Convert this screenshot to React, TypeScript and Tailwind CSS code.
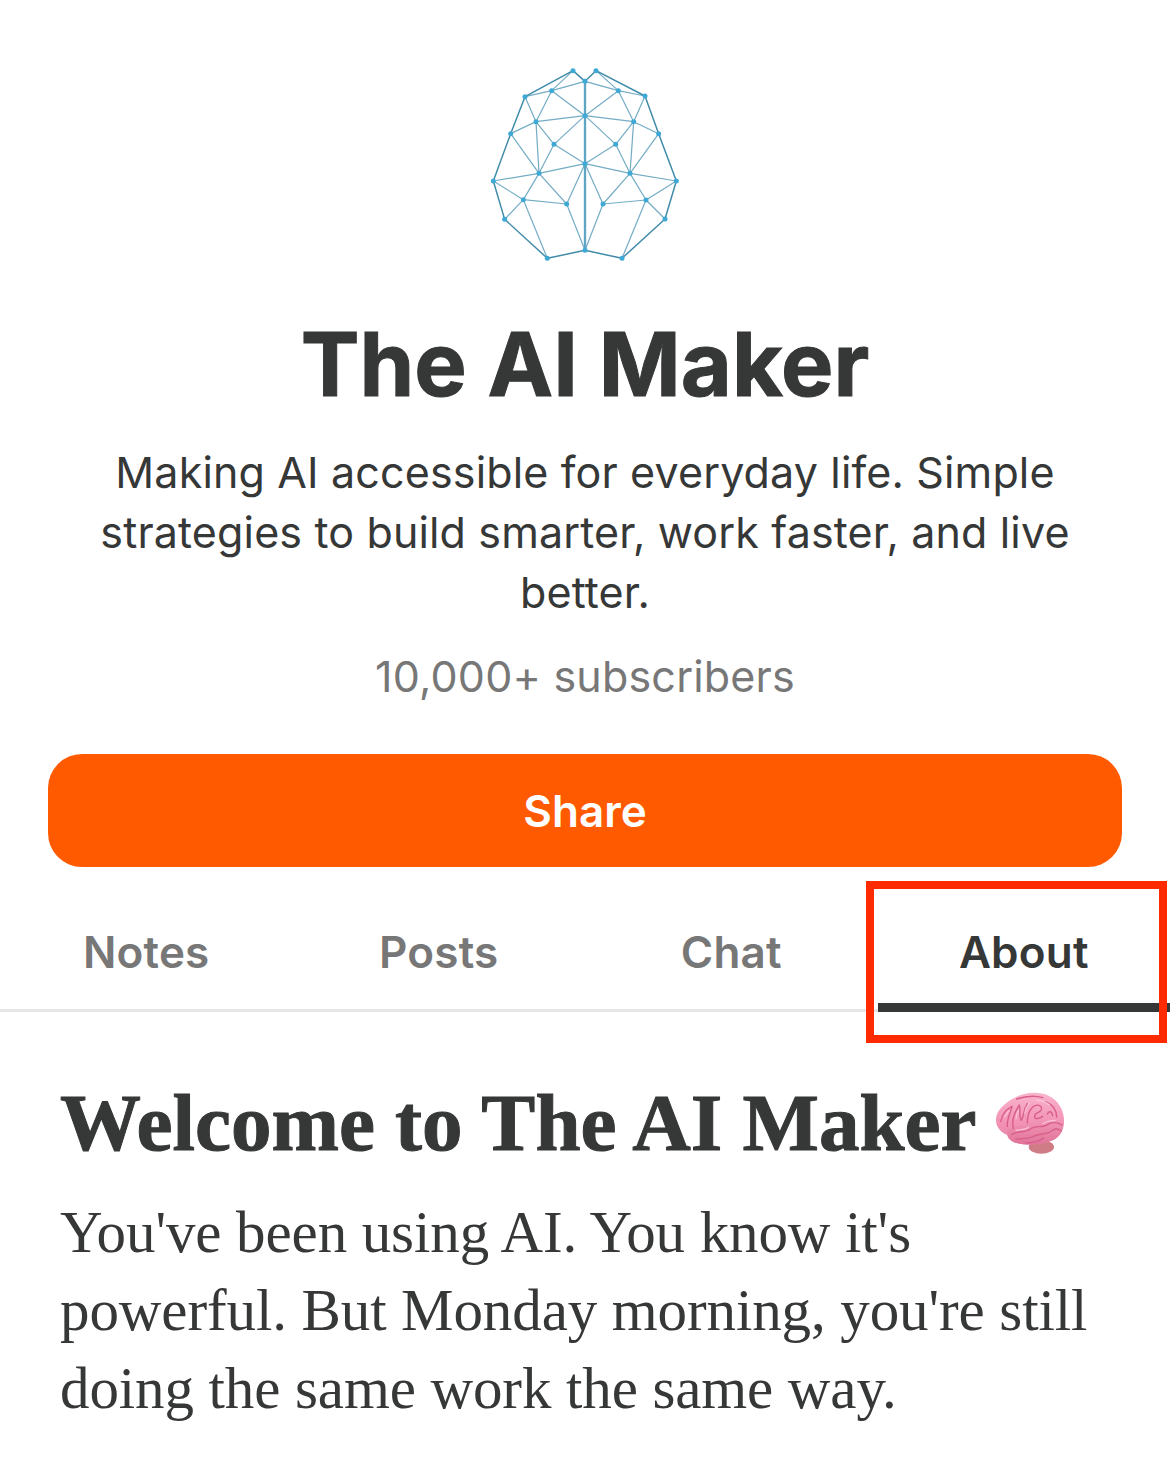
const outer: [number, number][] = [[309,62],[345,94],[378,62],[525,138],[566,251],[619,393],[585,507],[456,625],[345,601],[232,625],[104,508],[70,393],[122,251],[165,140]];
const inner: [number, number][] = [[245,122],[445,122],[345,197],[198,215],[491,215],[252,283],[437,283],[345,341],[207,370],[480,370],[160,449],[528,450],[290,462],[399,462]];
const edges: number[][] = [
[309,62,245,122],[165,140,245,122],[245,122,345,94],[345,94,445,122],[378,62,445,122],[445,122,525,138],
[165,140,198,215],[245,122,198,215],[245,122,345,197],[445,122,345,197],[445,122,491,215],[525,138,491,215],
[198,215,345,197],[345,197,491,215],[122,251,198,215],[491,215,566,251],
[198,215,252,283],[198,215,207,370],[122,251,207,370],[252,283,345,197],[252,283,207,370],[252,283,345,341],
[491,215,437,283],[491,215,480,370],[566,251,480,370],[437,283,345,197],[437,283,480,370],[437,283,345,341],
[70,393,207,370],[207,370,345,341],[345,341,480,370],[480,370,619,393],
[70,393,160,449],[207,370,160,449],[160,449,104,508],[160,449,290,462],[207,370,290,462],[290,462,345,341],[290,462,345,601],[160,449,232,625],
[619,393,528,450],[480,370,528,450],[528,450,585,507],[528,450,399,462],[480,370,399,462],[399,462,345,341],[399,462,345,601],[528,450,456,625],
];
const outerLines: number[][] = [[309,62,165,140],[165,140,122,251],[122,251,70,393],[70,393,104,508],[104,508,232,625],[232,625,345,601],[345,601,456,625],[456,625,585,507],[585,507,619,393],[619,393,566,251],[566,251,525,138],[525,138,378,62],[378,62,345,94],[345,94,309,62]];

function Logo() {
  return (
    <svg width="230" height="225" viewBox="0 0 690 675" className="block">
      {edges.map((e, i) => <line key={i} x1={e[0]} y1={e[1]} x2={e[2]} y2={e[3]} stroke="#74acc4" strokeWidth="3.6" />)}
      {outerLines.map((e, i) => <line key={i} x1={e[0]} y1={e[1]} x2={e[2]} y2={e[3]} stroke="#3f8aa8" strokeWidth="4.4" />)}
      <line x1="345" y1="94" x2="345" y2="601" stroke="#5ea6c4" strokeWidth="7" />
      {[...outer, ...inner].map((p, i) => <circle key={i} cx={p[0]} cy={p[1]} r="7.5" fill="#3fa9d6" />)}
    </svg>
  );
}

function Brain() {
  return (
    <svg width="90" height="80" viewBox="0 0 270 240" className="block mt-[4px] shrink-0">
      <defs>
        <linearGradient id="brainFill" x1="0" y1="0" x2="0" y2="1">
          <stop offset="0" stopColor="#f9b4cc" />
          <stop offset="0.55" stopColor="#f394b6" />
          <stop offset="1" stopColor="#e67fa3" />
        </linearGradient>
        <linearGradient id="lobeFill" x1="0" y1="0" x2="0" y2="1">
          <stop offset="0" stopColor="#f296b6" />
          <stop offset="1" stopColor="#e07498" />
        </linearGradient>
        <filter id="soft" x="-5%" y="-5%" width="110%" height="110%"><feGaussianBlur stdDeviation="1.3" /></filter>
      </defs>
      <g filter="url(#soft)">
        <ellipse cx="172" cy="186" rx="38" ry="20" fill="#cf7b86" />
        <path d="M36 100C38 78 60 54 92 38C122 22 162 18 194 32C224 46 242 78 240 112C238 142 224 160 200 168C172 180 128 182 98 174C82 170 72 160 70 150C50 142 34 124 36 100Z" fill="url(#brainFill)" />
        <path d="M70 150C68 130 90 120 116 124C130 110 158 106 178 106C200 102 226 102 239 110C238 142 224 160 200 168C172 180 128 182 98 174C82 170 72 160 70 150Z" fill="url(#lobeFill)" />
        <g fill="none" stroke="#d85f8d" strokeWidth="4.2" strokeLinecap="round" strokeLinejoin="round">
          <path d="M50 110C54 90 68 72 84 64C80 84 68 100 70 124" />
          <path d="M88 130C82 106 90 84 106 60C110 78 104 94 112 106C120 92 118 74 130 56" />
          <path d="M98 42C122 34 150 30 176 38" />
          <path d="M130 114C130 94 134 78 146 66C158 56 176 60 172 74C168 86 150 80 152 96C154 104 164 102 176 94" />
          <path d="M184 50C204 58 218 74 218 96" />
          <path d="M190 88C194 76 204 78 206 92" />
          <path d="M84 148C104 136 126 144 140 132C156 120 176 130 192 118C204 110 222 112 234 120" />
          <path d="M96 162C118 162 136 162 154 152C172 144 190 150 206 136C214 130 224 132 232 138" />
          <path d="M126 174C144 174 162 170 178 160" />
        </g>
        <g fill="none" stroke="#fdd0e0" strokeWidth="3.4" strokeLinecap="round" opacity="0.8">
          <path d="M62 96C66 88 70 82 76 78" />
          <path d="M96 102C96 92 100 82 104 76" />
          <path d="M122 84C124 72 128 64 136 54" />
          <path d="M158 46C172 46 186 50 196 60" />
          <path d="M96 136C110 132 124 136 134 126" />
          <path d="M176 116C186 110 200 106 214 106" />
        </g>
      </g>
    </svg>
  );
}

const tabs = ["Notes", "Posts", "Chat", "About"];

export default function App() {
  return (
    <div className="w-[1170px] h-[1478px] overflow-hidden bg-white text-[#363737] font-['Inter','Liberation_Sans',sans-serif]">
      <div className="flex justify-center pt-[50px]"><Logo /></div>
      <h1 className="mt-[39px] text-center text-[88px] leading-[100px] font-bold [-webkit-text-stroke:1px_#363737]">The AI Maker</h1>
      <p className="mt-[28px] mx-auto w-[1040px] text-center text-[43px] leading-[60px] tracking-[0.15px]">
        Making AI accessible for everyday life. Simple<br />strategies to build smarter, work faster, and live<br />better.
      </p>
      <p className="mt-[24px] text-center text-[43px] leading-[60px] tracking-[0.2px] text-[#777777]">10,000+ subscribers</p>
      <div className="mt-[48px] mx-[48px] h-[113px] rounded-[34px] bg-[#ff5a00] flex items-center justify-center text-white text-[44px] font-semibold">Share</div>
      <div className="relative mt-[14px] h-[130px]">
        <div className="grid grid-cols-4 h-[130px]">
          {tabs.map((t) => (
            <div key={t} className={`flex justify-center pt-[41px] text-[44px] leading-[60px] font-semibold tracking-[0.2px] ${t === "About" ? "text-[#363737]" : "text-[#777777]"}`}>{t}</div>
          ))}
        </div>
        <div className="absolute left-0 right-0 top-[128px] h-[3px] bg-[#e6e6e6]" />
        <div className="absolute left-[878px] right-0 top-[122px] h-[9px] bg-[#363737]" />
        <div className="absolute left-[866px] top-0 w-[301px] h-[162px] border-[8px] border-[#ff2a00]" />
      </div>
      <div className="px-[60px] pt-[62px]">
        <div className="flex items-center gap-[8px]">
          <h2 className="font-['Liberation_Serif',serif] text-[81px] leading-[100px] font-bold whitespace-nowrap [-webkit-text-stroke:1px_#363737]">Welcome to The AI Maker</h2>
          <Brain />
        </div>
        <p className="mt-[20px] font-['Liberation_Serif',serif] text-[59px] leading-[78px] tracking-[-0.1px]">
          You've been using AI. You know it's<br />powerful. But Monday morning, you're still<br />doing the same work the same way.
        </p>
      </div>
    </div>
  );
}
